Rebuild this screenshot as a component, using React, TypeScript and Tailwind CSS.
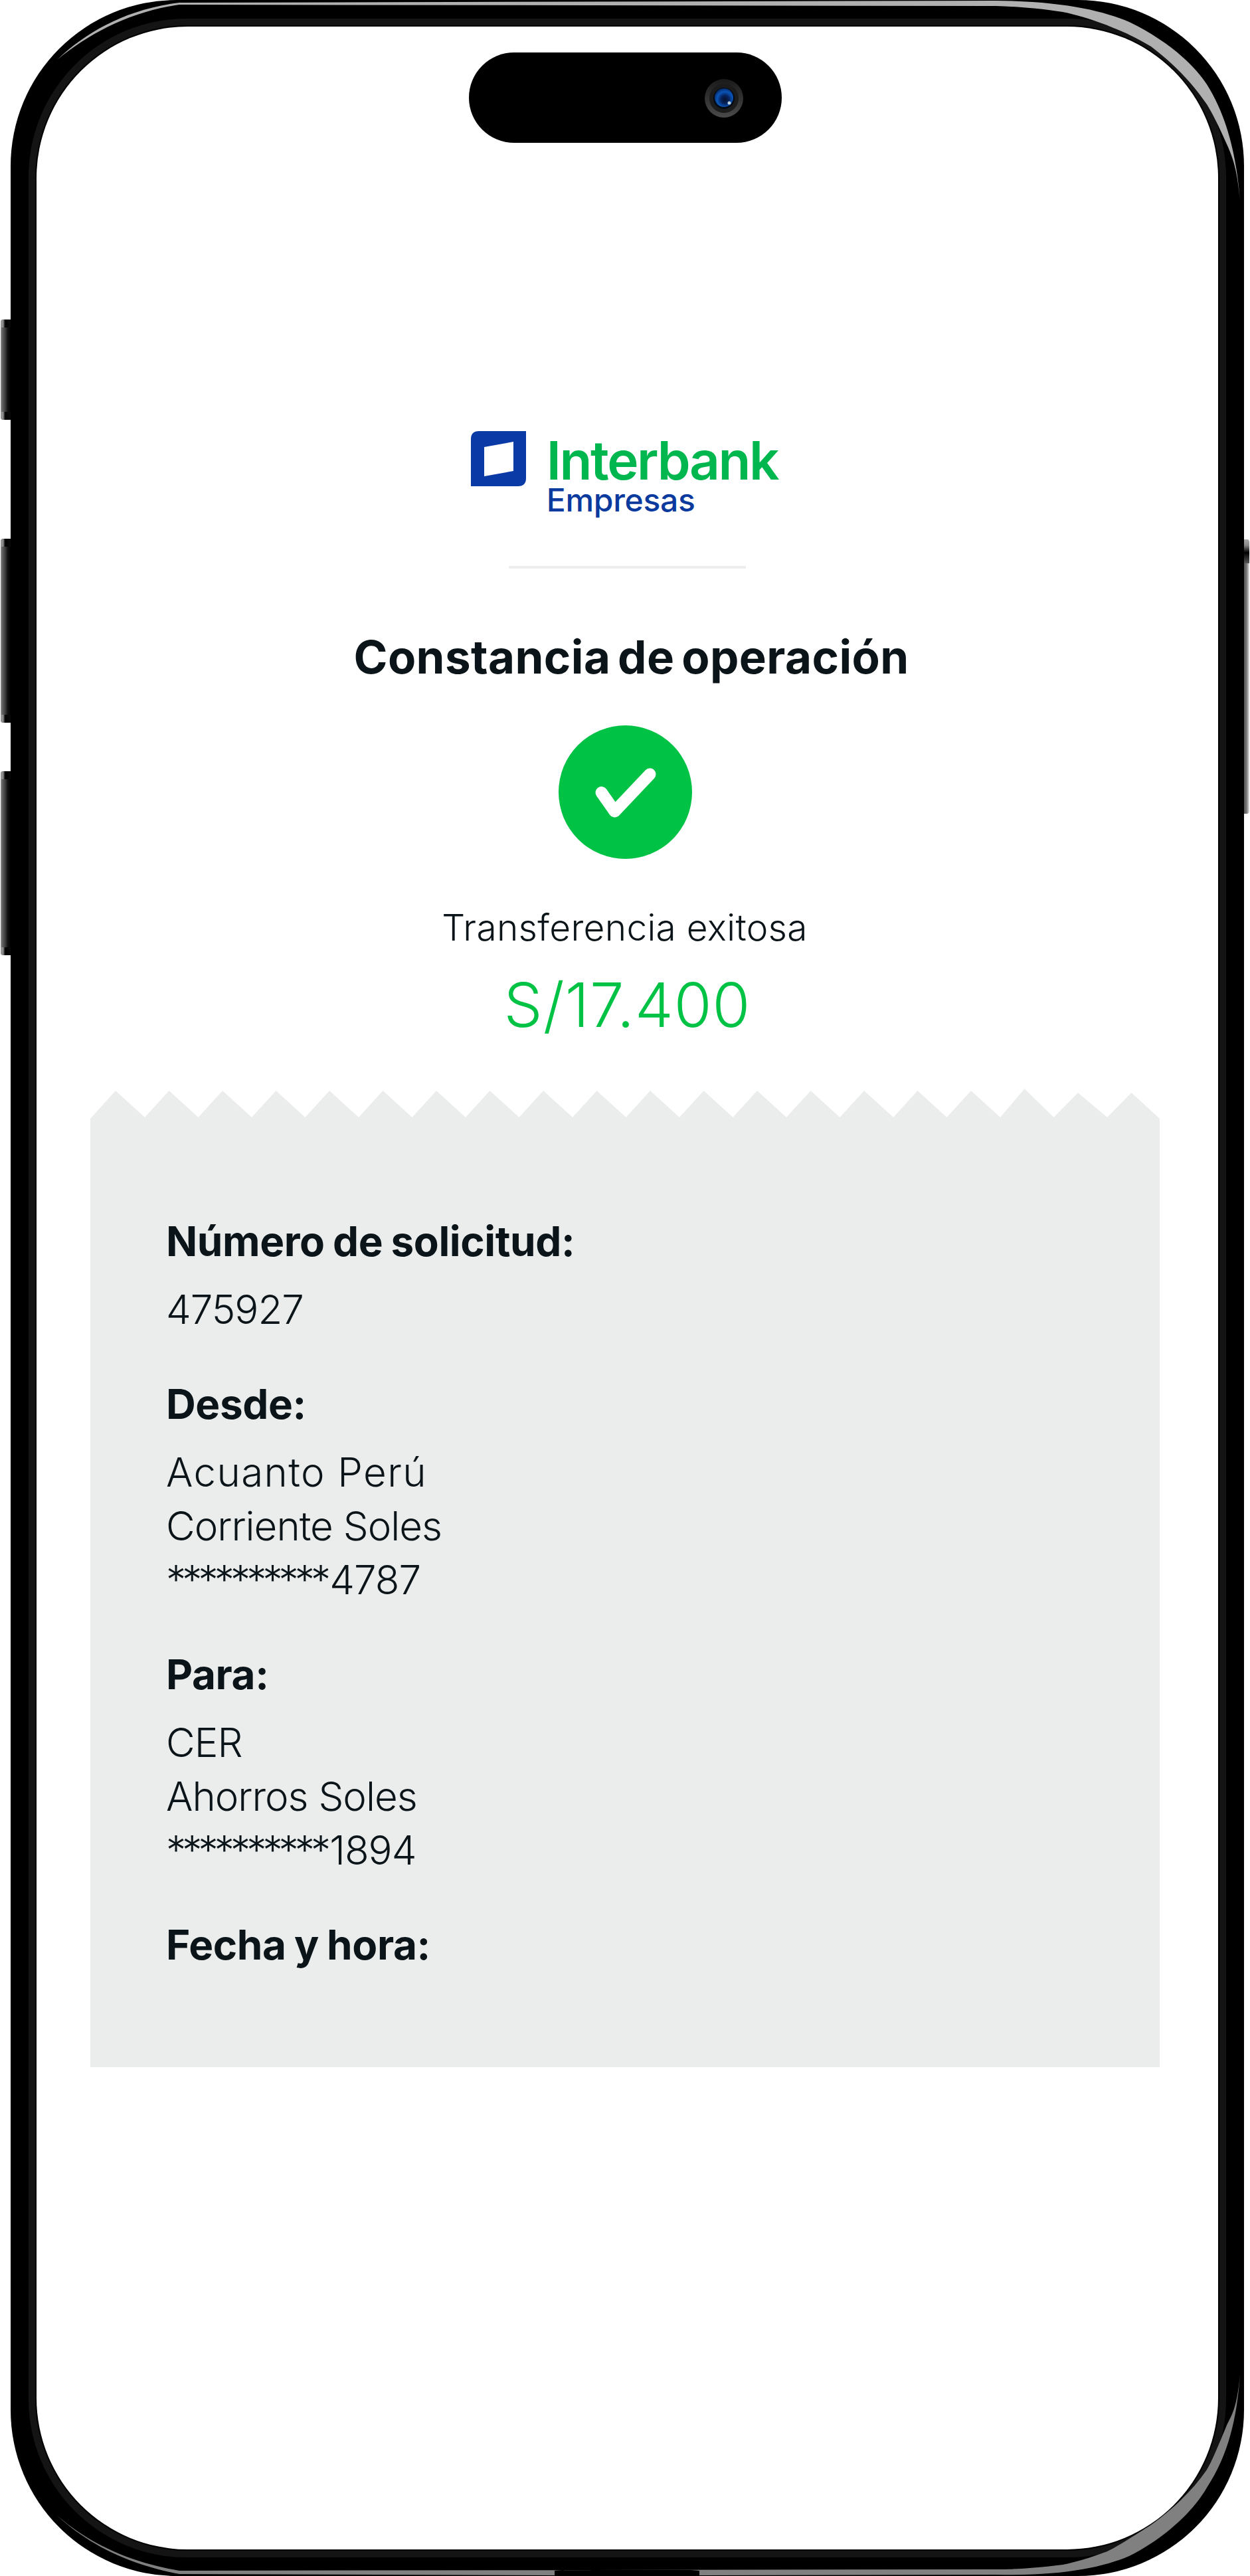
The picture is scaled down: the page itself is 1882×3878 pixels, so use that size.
import React from 'react';

const GREEN = '#00c244';

// Peaks of the torn edge as [x, y]; the last ones in the picture are a bit uneven
const TEETH = Array.from({ length: 20 }, (_, i) => i);
const tornEdge = () => {
  const pts = ['0,46', '0,45'];
  TEETH.forEach((i) => {
    const peak = 38 + i * 80.5;
    const y = i === 17 ? 0 : i >= 18 ? 6 : 3;
    pts.push(`${peak},${y}`);
    if (peak + 44 < 1610) pts.push(`${peak + 44},43`);
  });
  pts.push('1610,45', '1610,46');
  return pts.join(' ');
};

const Label: React.FC<{ children: React.ReactNode }> = ({ children }) => (
  <div className="text-[62px] leading-[81px] font-bold tracking-[-0.4px] [word-spacing:-2px] text-[#0b1418] mb-[22px]">{children}</div>
);

const Value: React.FC<{ children: React.ReactNode }> = ({ children }) => (
  <div className="text-[60px] leading-[81px] font-light tracking-[-1px] text-[#0b1418] mb-[61px]">{children}</div>
);

const Masked: React.FC<{ last: string }> = ({ last }) => (
  <div>
    <span className="tracking-[-5.8px]">**********</span>
    <span className="ml-[4px]">{last}</span>
  </div>
);

const SideButton: React.FC<{ className: string }> = ({ className }) => (
  <div className={`absolute left-[1px] w-[15px] rounded-l-[4px] overflow-hidden bg-[linear-gradient(90deg,#9a9a9a_0%,#666_14%,#3c3c3c_45%,#111_70%,#000_100%)] ${className}`}>
    <div className="h-[12px] bg-[linear-gradient(90deg,#999_0%,#888_25%,#000_45%,#0a0a0a_100%)]" />
    <div className="absolute bottom-0 left-0 right-0 h-[12px] bg-[linear-gradient(90deg,#999_0%,#888_25%,#000_45%,#0a0a0a_100%)]" />
  </div>
);

const Highlights = () => (
  <svg className="absolute inset-0 pointer-events-none" width="1882" height="3878" viewBox="0 0 1882 3878">
    <path
      d="M86 90 C130 48 190 14 270 4 L1500 1 C1600 2 1660 16 1700 33 C1760 62 1800 100 1817 127 C1850 180 1862 240 1867 302 C1862 250 1855 235 1847 217 C1835 190 1825 170 1817 157 C1790 118 1765 95 1733 70 C1700 50 1680 44 1667 38 C1640 28 1620 22 1600 18 C1560 12 1530 10 1500 9 L270 7 C195 18 135 50 86 90 Z"
      fill="#b0b0b0"
    />
    <path
      d="M86 3787 C130 3828 190 3860 270 3875 L835 3877 L835 3870 L850 3869 L1040 3869 L1053 3870 L1053 3877 L1500 3876 C1600 3878 1660 3865 1700 3848 C1760 3818 1800 3775 1817 3745 C1850 3695 1862 3640 1867 3576 C1862 3625 1855 3635 1847 3651 C1835 3680 1825 3705 1817 3718 C1795 3750 1765 3778 1733 3801 C1700 3822 1680 3835 1667 3841 C1640 3851 1620 3857 1600 3861 C1560 3866 1530 3868 1500 3868 L270 3870 C198 3858 135 3830 86 3787 Z"
      fill="#808080"
    />
  </svg>
);

const Camera = () => (
  <svg className="absolute right-[58px] top-[40px]" width="58" height="58" viewBox="0 0 58 58">
    <defs>
      <linearGradient id="ring" x1="0" y1="0" x2="0" y2="1">
        <stop offset="0" stopColor="#1a1a1a" />
        <stop offset="1" stopColor="#4a4a4a" />
      </linearGradient>
      <radialGradient id="lens" cx="0.55" cy="0.6" r="0.6">
        <stop offset="0" stopColor="#06122c" />
        <stop offset="0.35" stopColor="#06225c" />
        <stop offset="0.7" stopColor="#0a55b8" />
        <stop offset="1" stopColor="#062a6a" />
      </radialGradient>
    </defs>
    <circle cx="29" cy="29" r="29" fill="url(#ring)" />
    <circle cx="29" cy="29" r="22" fill="#1c1c1c" />
    <circle cx="29" cy="29" r="16" fill="#020a14" />
    <circle cx="29" cy="28" r="14" fill="url(#lens)" />
    <circle cx="37" cy="36" r="2.5" fill="#b8d0dc" />
  </svg>
);

const Logo = () => (
  <div className="flex items-start gap-[31px]">
    <svg className="mt-[6px]" width="83" height="83" viewBox="0 0 83 83">
      <path
        d="M12 0 H83 V71 Q83 83 71 83 H0 V12 Q0 0 12 0 Z M20 24 V68 L64 60 V16 Z"
        fill="#0a3aa5"
        fillRule="evenodd"
      />
    </svg>
    <div className="flex flex-col pt-[14px]">
      <span className="text-[80px] leading-[72px] font-semibold tracking-[-2.4px] text-[#00b74f]">Interbank</span>
      <span className="text-[48px] leading-[48px] font-medium tracking-[-0.3px] text-[#0a3a9e]">Empresas</span>
    </div>
  </div>
);

export default function App() {
  return (
    <div className="relative w-[1882px] h-[3878px] bg-white font-['Inter',sans-serif] overflow-hidden">
      <SideButton className="top-[481px] h-[151px]" />
      <SideButton className="top-[811px] h-[277px]" />
      <SideButton className="top-[1161px] h-[277px]" />
      <div className="absolute left-[1873px] top-[812px] w-[8px] h-[413px] rounded-r-[4px] bg-[linear-gradient(90deg,#555_0%,#777_50%,#c4c4c4_85%,#ddd_100%)]">
        <div className="h-[36px] rounded-tr-[4px] bg-[linear-gradient(180deg,#aaa_0%,#888_25%,#000_55%,#555_100%)]" />
      </div>

      <div className="ml-[16px] w-[1857px] h-[3878px] rounded-[250px] bg-black pt-[28px] pb-[28px] px-[27px]">
        <div className="h-full rounded-[238px] bg-[#141414] p-[10px]">
          <div className="h-full rounded-[230px] bg-black p-[2px]">
            <div className="relative h-full rounded-[228px] bg-white flex flex-col items-center">
              <div className="absolute top-[39px] left-[651px] w-[471px] h-[136px] rounded-[68px] bg-black">
                <Camera />
              </div>

              <div className="mt-[603px] mb-[75px] mr-[9px]">
                <Logo />
              </div>
              <div className="w-[357px] h-[4px] bg-[#eeeeee]" />
              <h1 className="mt-[93px] ml-[12px] text-[69px] leading-[80px] font-bold tracking-[0.4px] [word-spacing:-6px] text-[#0b1418]">
                Constancia de operación
              </h1>
              <div className="mt-[63px] mr-[6px] w-[201px] h-[201px] rounded-full bg-[#00c244] flex items-center justify-center">
                <svg width="201" height="201" viewBox="0 0 201 201">
                  <path d="M64.5 101 L84.5 129.5 L137.5 73.5" fill="none" stroke="white" strokeWidth="18" strokeLinecap="round" strokeLinejoin="round" />
                </svg>
              </div>
              <p className="mt-[68px] mr-[8px] text-[55px] leading-[70px] font-light tracking-[0.3px] text-[#0b1418]">
                Transferencia exitosa
              </p>
              <p className="mt-[27px] text-[92px] leading-[110px] font-[350] tracking-[1px]" style={{ color: GREEN }}>
                S/17.400
              </p>

              <div className="mt-[71px] w-[1610px] self-start ml-[81px]">
                <svg className="block" width="1610" height="46" viewBox="0 0 1610 46">
                  <polygon points={tornEdge()} fill="#ebeded" />
                </svg>
                <div className="bg-[#ebeded] pt-[143px] pb-[122px] pl-[114px]">
                  <Label>Número de solicitud:</Label>
                  <Value>475927</Value>
                  <Label>Desde:</Label>
                  <Value>
                    <div className="tracking-[1.4px]">Acuanto Perú</div>
                    <div>Corriente Soles</div>
                    <Masked last="4787" />
                  </Value>
                  <Label>Para:</Label>
                  <Value>
                    <div>CER</div>
                    <div>Ahorros Soles</div>
                    <Masked last="1894" />
                  </Value>
                  <Label>Fecha y hora:</Label>
                </div>
              </div>
            </div>
          </div>
        </div>
      </div>
      <Highlights />
    </div>
  );
}
